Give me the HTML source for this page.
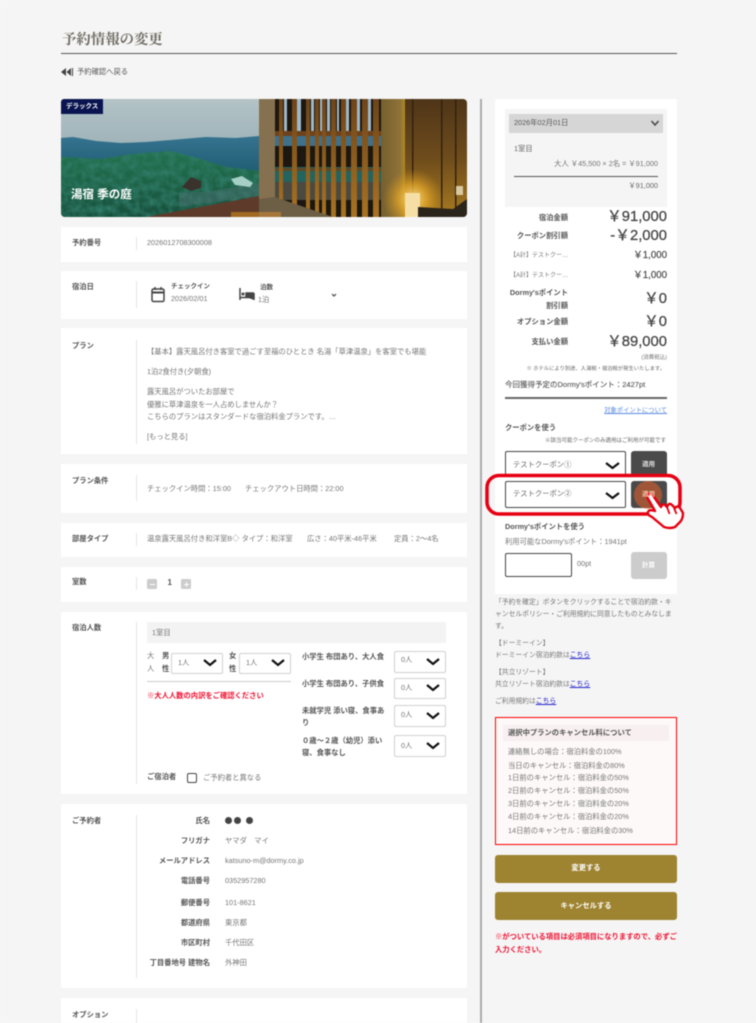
<!DOCTYPE html>
<html lang="ja">
<head>
<meta charset="utf-8">
<title>予約情報の変更</title>
<style>
html,body{margin:0;padding:0;background:#f5f5f5}
#w{position:relative;width:756px;height:1023px;overflow:hidden;background:#f5f5f5;font-family:"Liberation Sans","Noto Sans CJK JP",sans-serif;filter:blur(.45px)}
#w div,#w svg{position:absolute}
.t{position:absolute;white-space:nowrap;line-height:14px;font-size:7.3px;color:#757575}
.b{font-weight:700;color:#555}
.r{text-align:right}
.p{background:#fff;left:61px;width:406px}
.v{background:#e6e4de;left:135.5px;width:1.5px}
.s{background:#fff;border:1.5px solid #d0d0d0;border-radius:2px;box-sizing:border-box}
.d{background:#fff;border:1.5px solid #444;border-radius:2px;box-sizing:border-box}
.y{font-size:14.8px;color:#444;font-weight:400;right:89px;-webkit-text-stroke:.25px #444}
.m{font-size:9.7px;color:#444;right:89px;-webkit-text-stroke:.15px #444}
.n{font-size:6.8px}
a{color:#22c;text-decoration:underline}
</style>
</head>
<body>
<div id="w">
<span class="t" style="left:62px;top:33px;font-family:'Liberation Serif','Noto Serif CJK SC',serif;font-size:14.4px;font-weight:700;color:#6e6a60">予約情報の変更</span>
<div style="left:61px;top:52.5px;width:616px;height:1.5px;background:#555"></div>
<svg style="left:61px;top:68px" width="12" height="8" viewBox="0 0 12 8"><path d="M5 0v8L0 4zM10 0v8L5.500 4z M11 0h1v8h-1z" fill="#444"/></svg>
<span class="t" style="left:77px;top:65px;color:#555">予約確認へ戻る</span>

<!-- hero -->
<svg style="left:61px;top:99px" width="406" height="118" viewBox="0 0 406 118">
<defs>
<clipPath id="c"><rect width="406" height="118" rx="4"/></clipPath>
<clipPath id="fc"><path d="M0 58L40 60L70 55L110 52L140 60L165 68L200 72V118H0z"/></clipPath>
<filter id="nz" x="0" y="0" width="100%" height="100%"><feTurbulence type="fractalNoise" baseFrequency=".14" numOctaves="2" seed="4"/><feColorMatrix values="0 0 0 0 .03  0 0 0 0 .2  0 0 0 0 .14  0 0 1.8 0 -.55"/></filter>
<linearGradient id="sky" x1="0" y1="0" x2="0" y2="1"><stop offset="0" stop-color="#b3c3c6"/><stop offset="1" stop-color="#7f9aa6"/></linearGradient>
<linearGradient id="mt" x1="0" y1="0" x2="0" y2="1"><stop offset="0" stop-color="#35738f"/><stop offset="1" stop-color="#1c5a70"/></linearGradient>
<linearGradient id="for" x1="0" y1="0" x2="0" y2="1"><stop offset="0" stop-color="#22734f"/><stop offset="1" stop-color="#17503d"/></linearGradient>
<linearGradient id="wall" x1="0" y1="0" x2="0" y2="1"><stop offset="0" stop-color="#4f3518"/><stop offset=".5" stop-color="#6e4c1c"/><stop offset="1" stop-color="#a87a20"/></linearGradient>
<linearGradient id="sl" x1="0" y1="0" x2="0" y2="1"><stop offset="0" stop-color="#6e451b"/><stop offset="1" stop-color="#a87322"/></linearGradient>
<linearGradient id="col" x1="0" y1="0" x2="1" y2="0"><stop offset="0" stop-color="#75602f"/><stop offset=".8" stop-color="#8f7238"/><stop offset="1" stop-color="#b08a20"/></linearGradient>
<radialGradient id="lamp"><stop offset="0" stop-color="#ffdf80"/><stop offset=".5" stop-color="#e0a428" stop-opacity=".75"/><stop offset="1" stop-color="#c08a20" stop-opacity="0"/></radialGradient>
</defs>
<g clip-path="url(#c)">
<rect width="200" height="118" fill="url(#sky)"/>
<path d="M0 39L12 38L35 42L60 44L85 43L110 41L145 38L175 39L198 37V80H0z" fill="url(#mt)"/>
<path d="M0 58L40 60L70 55L110 52L140 60L165 68L200 72V118H0z" fill="url(#for)"/>
<g clip-path="url(#fc)"><rect width="200" height="118" filter="url(#nz)"/></g>
<path d="M118 94L150 92L198 84V97L118 108z" fill="#4a6f70" opacity=".5"/>
<path d="M121 88l9-10 10 4v7l-10 3z" fill="#3a322c"/>
<path d="M170 80l11-3 11 7-3 4-15-2z" fill="#a6d0c6"/>
<path d="M85 118L198 97V118z" fill="#5e3a2a"/>
<rect x="170" y="113" width="30" height="5" fill="#a06a24"/>
<rect x="198" y="0" width="16" height="100" fill="#85714f"/>
<rect x="214" y="0" width="106" height="118" fill="#1c1710"/>
<g fill="#9fb8c8"><rect x="223" y="0" width="3" height="32"/><rect x="236" y="0" width="4" height="32"/><rect x="250" y="0" width="3" height="32"/><rect x="259" y="0" width="2" height="32"/><rect x="266" y="0" width="3" height="32"/><rect x="276" y="0" width="2" height="32"/><rect x="285" y="0" width="3" height="32"/><rect x="296" y="0" width="3" height="32"/><rect x="307" y="0" width="3" height="32"/></g>
<rect x="214" y="37" width="106" height="10" fill="#3f708c"/>
<rect x="214" y="68" width="106" height="15" fill="#236460"/>
<rect x="214" y="83" width="106" height="18" fill="#4c4a40"/>
<rect x="214" y="32" width="106" height="5" fill="#6d421c"/>
<rect x="214" y="69" width="106" height="3" fill="#6d421c" opacity=".8"/>
<g fill="url(#sl)"><rect x="218" y="0" width="4" height="118"/><rect x="231" y="0" width="5" height="118"/><rect x="245" y="0" width="4" height="118"/><rect x="254" y="0" width="4" height="118"/><rect x="261" y="0" width="4" height="118"/><rect x="270" y="0" width="5" height="118"/><rect x="280" y="0" width="5" height="118"/><rect x="290" y="0" width="6" height="118"/><rect x="301" y="0" width="6" height="118"/><rect x="312" y="0" width="6" height="118"/></g>
<path d="M198 100L214 98L272 118H198z" fill="#6d5e46"/>
<rect x="198" y="113" width="22" height="5" fill="#a5773a"/>
<rect x="320" y="0" width="24" height="118" fill="url(#col)"/>
<rect x="344" y="0" width="62" height="118" fill="url(#wall)"/>
<g fill="#33220e"><rect x="351" y="0" width="1.500" height="118"/><rect x="380" y="0" width="1.500" height="118"/><rect x="394" y="0" width="1.500" height="118"/></g>
<circle cx="352" cy="100" r="30" fill="url(#lamp)"/>
<rect x="344" y="94" width="15" height="24" fill="#f6dfa6"/>
<path d="M357 108L392 110L406 100V118H357z" fill="#2b241a"/>
<rect x="395" y="87" width="7" height="9" fill="#d8c9a0"/>
</g>
</svg>
<div style="left:61px;top:99px;width:42px;height:15px;background:#0a1450;border-radius:3px 0 0 0"></div>
<span class="t" style="left:66px;top:99.500px;font-size:6.5px;font-weight:700;color:#fff">デラックス</span>
<span class="t" style="left:71px;top:188px;font-size:11.500px;font-weight:700;color:#fff">湯宿 季の庭</span>

<!-- panels -->
<div class="p" style="top:227px;height:35px"></div><div class="v" style="top:237px;height:13px"></div>
<div class="p" style="top:271px;height:48px"></div><div class="v" style="top:281px;height:27px"></div>
<div class="p" style="top:328px;height:126px"></div><div class="v" style="top:340px;height:104px"></div>
<div class="p" style="top:464px;height:49px"></div><div class="v" style="top:475px;height:26px"></div>
<div class="p" style="top:523px;height:34px"></div><div class="v" style="top:533px;height:13px"></div>
<div class="p" style="top:567px;height:35px"></div><div class="v" style="top:577px;height:13px"></div>
<div class="p" style="top:612px;height:182px"></div><div class="v" style="top:622px;height:162px"></div>
<div class="p" style="top:804px;height:184px"></div><div class="v" style="top:815px;height:163px"></div>
<div class="p" style="top:998px;height:25px"></div><div class="v" style="top:1009px;height:14px"></div>

<span class="t b" style="left:72px;top:236px">予約番号</span>
<span class="t" style="left:147px;top:235.500px">2026012708300008</span>
<span class="t b" style="left:72px;top:280px">宿泊日</span>
<span class="t b" style="left:72px;top:339px">プラン</span>
<span class="t b" style="left:72px;top:474px">プラン条件</span>
<span class="t b" style="left:72px;top:532px">部屋タイプ</span>
<span class="t b" style="left:72px;top:575px">室数</span>
<span class="t b" style="left:72px;top:621px">宿泊人数</span>
<span class="t b" style="left:72px;top:814px">ご予約者</span>
<span class="t b" style="left:72px;top:1008px">オプション</span>

<!-- date -->
<svg style="left:150px;top:286px" width="16" height="17" viewBox="0 0 16 17"><rect x="2" y="3" width="12" height="12.500" rx="1.500" fill="none" stroke="#444" stroke-width="1.500"/><path d="M2 6.500h12" stroke="#444" stroke-width="2"/><path d="M5 1v3M11 1v3" stroke="#444" stroke-width="1.500"/></svg>
<span class="t b" style="left:171px;top:280px;font-size:6.500px">チェックイン</span>
<span class="t" style="left:171px;top:292px">2026/02/01</span>
<svg style="left:239px;top:288px" width="16" height="13" viewBox="0 0 16 13"><path d="M1 0v12M1 9.500h14M15 12V6q0-1-1-1H7v4" fill="#444" stroke="#444" stroke-width="1.500"/><circle cx="4" cy="6" r="1.500" fill="#444"/></svg>
<span class="t b" style="left:260px;top:281px;font-size:6.500px">泊数</span>
<span class="t" style="left:258px;top:293px">1泊</span>
<svg style="left:331px;top:293px" width="6" height="5" viewBox="0 0 6 5"><path d="M1 1l2 2 2-2" fill="none" stroke="#444" stroke-width="1.200"/></svg>

<!-- plan -->
<span class="t" style="left:147px;top:345px">【基本】露天風呂付き客室で過ごす至福のひととき 名湯「草津温泉」を客室でも堪能</span>
<span class="t" style="left:147px;top:365px">1泊2食付き(夕朝食)</span>
<span class="t" style="left:147px;top:385px">露天風呂がついたお部屋で</span>
<span class="t" style="left:147px;top:397.500px">優雅に草津温泉を一人占めしませんか？</span>
<span class="t" style="left:147px;top:410px">こちらのプランはスタンダードな宿泊料金プランです。…</span>
<span class="t" style="left:147px;top:430px">[もっと見る]</span>

<span class="t" style="left:147px;top:481.500px">チェックイン時間：15:00</span>
<span class="t" style="left:245px;top:481.500px">チェックアウト日時間：22:00</span>

<span class="t" style="left:147px;top:531.500px">温泉露天風呂付き和洋室B◇ タイプ：和洋室</span>
<span class="t" style="left:307px;top:531.500px">広さ：40平米-46平米</span>
<span class="t" style="left:394px;top:531.500px">定員：2～4名</span>

<div style="left:147px;top:579px;width:10px;height:10px;background:#ccc;border-radius:1.500px"></div>
<div style="left:149.500px;top:583.500px;width:5px;height:1px;background:#fff"></div>
<span class="t" style="left:167.500px;top:576px;font-size:8px;font-weight:700;color:#555">1</span>
<div style="left:181px;top:579px;width:10px;height:10px;background:#ccc;border-radius:1.500px"></div>
<div style="left:183.500px;top:583.500px;width:5px;height:1px;background:#fff"></div>
<div style="left:185.500px;top:581.500px;width:1px;height:5px;background:#fff"></div>

<!-- guests -->
<div style="left:147px;top:622px;width:299px;height:21px;background:#f3f3f3"></div>
<span class="t" style="left:152px;top:625.500px">1室目</span>
<span class="t" style="left:147px;top:649px">大</span><span class="t" style="left:147px;top:662px">人</span>
<span class="t b" style="left:162px;top:649px">男</span><span class="t b" style="left:162px;top:662px">性</span>
<div class="s" style="left:171px;top:653px;width:52px;height:21px"></div>
<span class="t" style="left:178px;top:655.500px">1人</span>
<span class="t b" style="left:229px;top:649px">女</span><span class="t b" style="left:229px;top:662px">性</span>
<div class="s" style="left:239px;top:653px;width:52px;height:21px"></div>
<span class="t" style="left:246px;top:655.500px">1人</span>
<div style="left:147px;top:681px;width:144px;height:1px;background:#ccc"></div>
<span class="t" style="left:147px;top:688.500px;font-weight:700;color:#f01030">※大人人数の内訳をご確認ください</span>

<span class="t b" style="left:302px;top:650px">小学生 布団あり、大人食</span>
<span class="t b" style="left:302px;top:677px">小学生 布団あり、子供食</span>
<span class="t b" style="left:302px;top:703.500px">未就学児 添い寝、食事あ</span>
<span class="t b" style="left:302px;top:716px">り</span>
<span class="t b" style="left:302px;top:733.500px">０歳～２歳（幼児）添い</span>
<span class="t b" style="left:302px;top:746px">寝、食事なし</span>
<div class="s" style="left:394px;top:651px;width:52px;height:22px"></div><span class="t" style="left:401px;top:653px">0人</span>
<div class="s" style="left:394px;top:678px;width:52px;height:21px"></div><span class="t" style="left:401px;top:681px">0人</span>
<div class="s" style="left:394px;top:705px;width:52px;height:22px"></div><span class="t" style="left:401px;top:707.500px">0人</span>
<div class="s" style="left:394px;top:735px;width:52px;height:22px"></div><span class="t" style="left:401px;top:738.500px">0人</span>
<span class="t b" style="left:147px;top:770px">ご宿泊者</span>
<div class="d" style="left:187px;top:772.500px;width:10px;height:10px"></div>
<span class="t" style="left:203px;top:771px">ご予約者と異なる</span>

<!-- reserver -->
<span class="t b r" style="right:546px;top:814px">氏名</span>
<div style="left:225px;top:817px;width:7px;height:7px;border-radius:50%;background:#444"></div>
<div style="left:234px;top:817px;width:7px;height:7px;border-radius:50%;background:#444"></div>
<div style="left:246px;top:817px;width:7px;height:7px;border-radius:50%;background:#444"></div>
<span class="t b r" style="right:546px;top:834px">フリガナ</span><span class="t" style="left:225px;top:833.500px">ヤマダ　マイ</span>
<span class="t b r" style="right:546px;top:854px">メールアドレス</span><span class="t" style="left:225px;top:854px">katsuno-m@dormy.co.jp</span>
<span class="t b r" style="right:546px;top:874px">電話番号</span><span class="t" style="left:225px;top:874px">0352957280</span>
<span class="t b r" style="right:546px;top:895.500px">郵便番号</span><span class="t" style="left:225px;top:895.500px">101-8621</span>
<span class="t b r" style="right:546px;top:915.500px">都道府県</span><span class="t" style="left:225px;top:915.500px">東京都</span>
<span class="t b r" style="right:546px;top:935.500px">市区町村</span><span class="t" style="left:225px;top:935.500px">千代田区</span>
<span class="t b r" style="right:546px;top:956px">丁目番地号 建物名</span><span class="t" style="left:225px;top:955.500px">外神田</span>

<!-- right column -->
<div style="left:480px;top:99px;width:1.500px;height:924px;background:#aaa"></div>
<div style="left:495px;top:99px;width:182px;height:495px;background:#fff;border-radius:2px"></div>
<div style="left:505px;top:109px;width:162px;height:98px;background:#f5f5f5"></div>
<div style="left:509px;top:114px;width:154px;height:18.500px;background:#d6d6d6"></div>
<span class="t" style="left:514px;top:116px;color:#555">2026年02月01日</span>
<svg style="left:650px;top:120px" width="10" height="7" viewBox="0 0 10 7"><path d="M1.500 1l3.500 4 3.500-4" fill="none" stroke="#444" stroke-width="1.500"/></svg>
<span class="t" style="left:514px;top:142px;color:#666">1室目</span>
<span class="t r" style="right:98px;top:157px">大人 ￥45,500 × 2名 = ￥91,000</span>
<div style="left:514px;top:175.500px;width:144px;height:1.500px;background:#555"></div>
<span class="t r" style="right:98px;top:179px;color:#666">￥91,000</span>

<span class="t b r" style="right:188px;top:210.500px">宿泊金額</span><span class="t y r" style="top:210px">￥91,000</span>
<span class="t b r" style="right:188px;top:228.500px">クーポン割引額</span><span class="t y r" style="top:229px">-￥2,000</span>
<span class="t r" style="right:188px;top:249px;font-size:6px">【A計】テストクー…</span><span class="t m r" style="top:248.500px">￥1,000</span>
<span class="t r" style="right:188px;top:269px;font-size:6px">【A計】テストクー…</span><span class="t m r" style="top:268.500px">￥1,000</span>
<span class="t b r" style="right:188px;top:286px">Dormy'sポイント</span>
<span class="t b r" style="right:188px;top:298.500px">割引額</span><span class="t y r" style="top:292px">￥0</span>
<span class="t b r" style="right:188px;top:314.500px">オプション金額</span><span class="t y r" style="top:314.500px">￥0</span>
<span class="t b r" style="right:188px;top:334.500px">支払い金額</span><span class="t y r" style="top:334.500px">￥89,000</span>
<span class="t r" style="right:89px;top:351px;font-size:5.500px">(消費税込)</span>
<span class="t r" style="right:91px;top:362px;font-size:5.300px;color:#666">※ ホテルにより別途、入湯税・宿泊税が発生いたします。</span>
<span class="t" style="left:505px;top:378px;color:#555;font-size:7.500px;-webkit-text-stroke:.1px #555">今回獲得予定のDormy'sポイント：2427pt</span>
<div style="left:505px;top:397px;width:162px;height:1.500px;background:#666"></div>
<span class="t r" style="right:89px;top:404px;font-size:6.300px;color:#5a8ae0;text-decoration:underline">対象ポイントについて</span>
<span class="t b" style="left:505px;top:421px">クーポンを使う</span>
<span class="t r" style="right:90px;top:434px;font-size:5.500px;color:#666">※該当可能クーポンのみ適用はご利用が可能です</span>
<div class="d" style="left:505px;top:451px;width:120.500px;height:25px"></div>
<span class="t" style="left:513px;top:458px;color:#666">テストクーポン①</span>
<div class="d" style="left:505px;top:481px;width:120.500px;height:27px"></div>
<span class="t" style="left:513px;top:486.500px;color:#666">テストクーポン②</span>
<svg style="left:0;top:0" width="756" height="1023" viewBox="0 0 756 1023"><g fill="none" stroke="#111" stroke-width="2.200"><path d="M204 660l6 5 6-5M272 660l6 5 6-5M427 659l6 5 6-5M427 685l6 5 6-5M427 713l6 5 6-5M427 743l6 5 6-5M606 463l6.500 5 6.500-5M606 493l6.500 5 6.500-5"/></g></svg>
<div style="left:631px;top:451px;width:36px;height:25px;background:#4a4a4a;border-radius:3px"></div>
<span class="t" style="left:642px;top:458px;font-size:6.500px;font-weight:700;color:#ddd">適用</span>
<div style="left:631px;top:481px;width:36px;height:27px;background:#4a4a4a;border-radius:3px"></div>
<svg style="left:0;top:0" width="756" height="1023" viewBox="0 0 756 1023">
<circle cx="648" cy="495" r="14" fill="#e5602a" fill-opacity=".55"/>
<rect x="487" y="475.500" width="193" height="38.500" rx="12" fill="none" stroke="#e60012" stroke-width="3.500"/>
<path d="M647 497Q647 493 651 494Q653 494 654 497L661 507Q663 503 665 505L667 507Q669 502 672 505L675 508Q678 505 680 508L683 513Q683 519 680 522L675 527Q670 529 664 527L652 517Q647 515 648 512Q649 509 655 511z" fill="#fff" stroke="#e60012" stroke-width="2.400" stroke-linejoin="round"/>
<path d="M667 507l2.500 7M674 508l2.500 6" fill="none" stroke="#e60012" stroke-width="1.800"/>
</svg>
<span class="t" style="left:642px;top:487.500px;font-size:6.500px;font-weight:700;color:#f7c4a8">適用</span>

<span class="t b" style="left:505px;top:520px">Dormy'sポイントを使う</span>
<span class="t" style="left:505px;top:535px">利用可能なDormy'sポイント：1941pt</span>
<div class="d" style="left:505px;top:553px;width:67px;height:24px"></div>
<span class="t" style="left:577px;top:557px">00pt</span>
<div style="left:631px;top:552px;width:36px;height:27px;background:#ccc;border-radius:3px"></div>
<span class="t" style="left:642px;top:558.500px;font-size:6.500px;font-weight:700;color:#fff">計算</span>

<span class="t n" style="left:495px;top:596px">「予約を確定」ボタンをクリックすることで宿泊約款・キ</span>
<span class="t n" style="left:495px;top:608px">ャンセルポリシー・ご利用規約に同意したものとみなしま</span>
<span class="t n" style="left:495px;top:619.500px">す。</span>
<span class="t n" style="left:495px;top:637px">【ドーミーイン】</span>
<span class="t n" style="left:495px;top:649px">ドーミーイン宿泊約款は<a>こちら</a></span>
<span class="t n" style="left:495px;top:666px">【共立リゾート】</span>
<span class="t n" style="left:495px;top:678px">共立リゾート宿泊約款は<a>こちら</a></span>
<span class="t n" style="left:495px;top:695px">ご利用規約は<a>こちら</a></span>

<div style="left:495px;top:717px;width:182px;height:128px;background:#fdf9f8;border:1.500px solid #f00;box-sizing:border-box"></div>
<div style="left:503px;top:725px;width:166px;height:16px;background:#f8f0f0"></div>
<span class="t" style="left:508px;top:725.500px;font-weight:700;color:#555">選択中プランのキャンセル料について</span>
<span class="t" style="left:508px;top:744.500px">連絡無しの場合：宿泊料金の100%</span>
<span class="t" style="left:508px;top:758.500px">当日のキャンセル：宿泊料金の80%</span>
<span class="t" style="left:508px;top:771px">1日前のキャンセル：宿泊料金の50%</span>
<span class="t" style="left:508px;top:783.500px">2日前のキャンセル：宿泊料金の50%</span>
<span class="t" style="left:508px;top:797px">3日前のキャンセル：宿泊料金の20%</span>
<span class="t" style="left:508px;top:810px">4日前のキャンセル：宿泊料金の20%</span>
<span class="t" style="left:508px;top:824px">14日前のキャンセル：宿泊料金の30%</span>

<div style="left:495px;top:855px;width:182px;height:27.500px;background:#9e8330;border-radius:3px"></div>
<span class="t" style="left:495px;width:182px;text-align:center;top:861px;font-weight:700;color:#fff">変更する</span>
<div style="left:495px;top:892px;width:182px;height:28px;background:#9e8330;border-radius:3px"></div>
<span class="t" style="left:495px;width:182px;text-align:center;top:899px;font-weight:700;color:#fff">キャンセルする</span>
<span class="t" style="left:495px;top:930px;font-weight:700;color:#f01030">※がついている項目は必須項目になりますので、必ずご</span>
<span class="t" style="left:495px;top:943px;font-weight:700;color:#f01030">入力ください。</span>
</div>
</body>
</html>
